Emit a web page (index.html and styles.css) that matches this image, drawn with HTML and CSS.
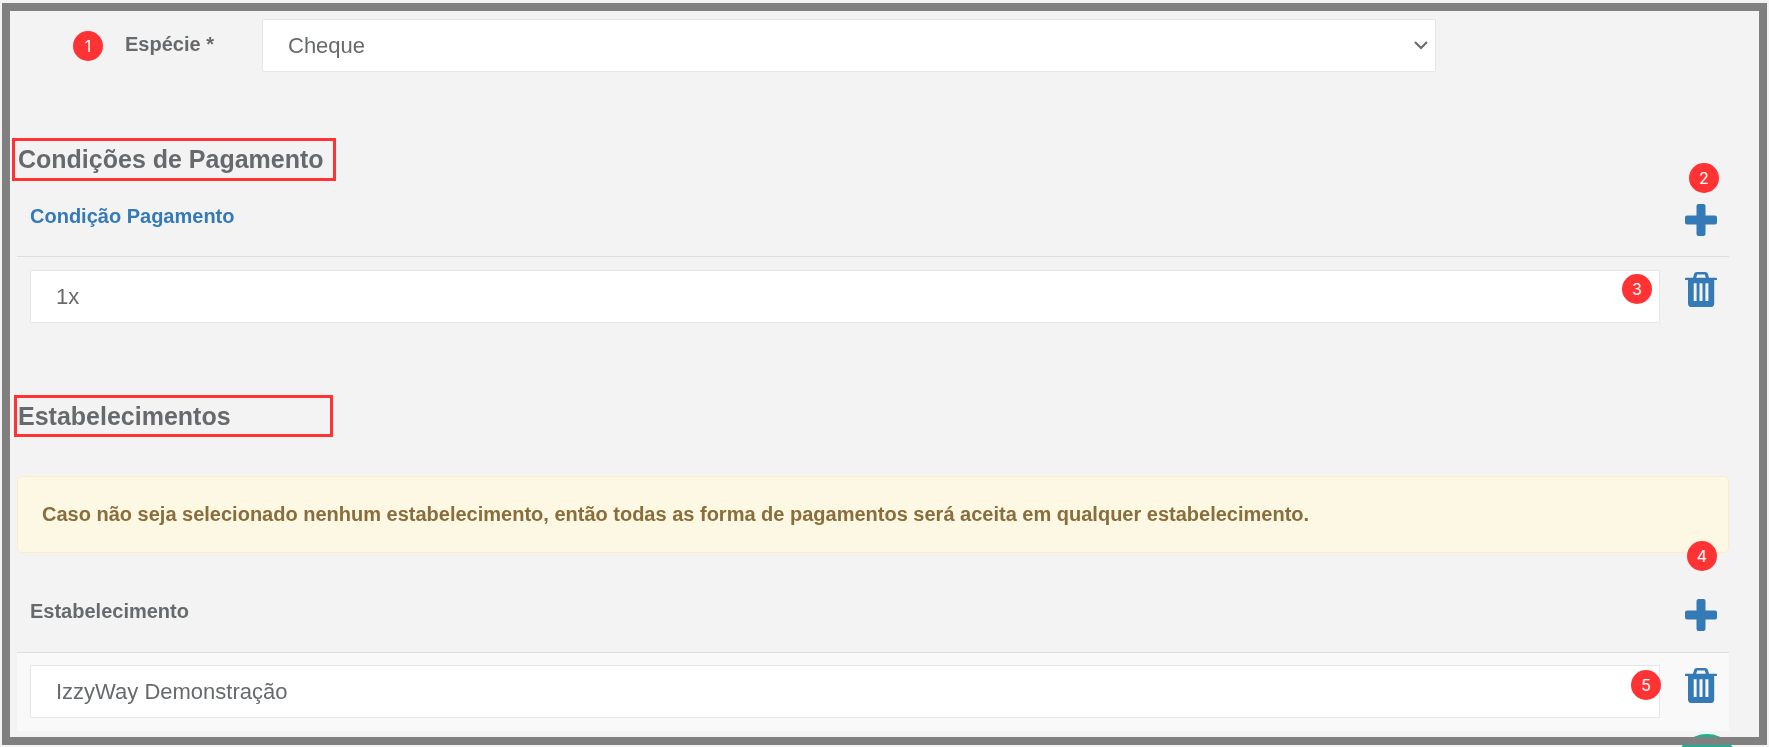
FILE: index.html
```html
<!DOCTYPE html>
<html lang="pt-BR">
<head>
<meta charset="utf-8">
<title>Forma de Pagamento</title>
<link rel="stylesheet" href="styles.css">
</head>
<body>
<svg class="sprite" aria-hidden="true">
  <symbol id="plus" viewBox="0 0 32 32"><path d="M13.500 0h5a2 2 0 0 1 2 2v9.500H30a2 2 0 0 1 2 2v5a2 2 0 0 1-2 2h-9.500V30a2 2 0 0 1-2 2h-5a2 2 0 0 1-2-2v-9.500H2a2 2 0 0 1-2-2v-5a2 2 0 0 1 2-2h9.500V2a2 2 0 0 1 2-2z"/></symbol>
  <symbol id="trash" viewBox="0 0 32 35"><path fill-rule="evenodd" d="M11.800 0h8.400c1.200 0 2.200.700 2.600 1.800L24 5.700h7.300c.4 0 .7.300.7.700v1c0 .4-.3.700-.7.700H29.200v23.300c0 2-1.200 3.600-2.800 3.600H5.800C4.200 35 3 33.400 3 31.400V8.100H.7C.3 8.100 0 7.800 0 7.400v-1c0-.4.3-.7.700-.7H8l1.200-3.900C9.600.700 10.600 0 11.800 0zM12.200 2.500l-1 3.200h9.600l-1-3.200zM8.700 11.300h2.900v17.700H8.700zM14.500 11.300h3v17.700h-3zM20.400 11.300h3v17.700h-3z"/></symbol>
</svg>
<button class="fab" type="button" aria-label="Ajuda"></button>
<main class="frame">
  <div class="field-row">
    <span class="badge">1</span>
    <label class="field-label" for="especie">Espécie *</label>
    <div class="select-wrap">
      <select class="control" id="especie"><option>Cheque</option></select>
      <svg class="chevron" viewBox="0 0 14 10" aria-hidden="true"><path d="M1 2l6 6 6-6"/></svg>
    </div>
  </div>

  <section>
    <h2 class="title title-conditions">Condições de Pagamento</h2>
    <table class="grid">
      <thead>
        <tr>
          <th><a class="sort" href="#" id="col-condicao">Condição Pagamento</a></th>
          <th class="action"><span class="badge badge-add">2</span><button class="icon-btn" type="button" aria-label="Adicionar condição"><svg class="icon-plus"><use href="#plus"/></svg></button></th>
        </tr>
      </thead>
      <tbody>
        <tr>
          <td><input class="control" type="text" value="1x" aria-labelledby="col-condicao"><span class="badge badge-condition">3</span></td>
          <td class="action"><button class="icon-btn" type="button" aria-label="Excluir condição"><svg class="icon-trash"><use href="#trash"/></svg></button></td>
        </tr>
      </tbody>
    </table>
  </section>

  <section>
    <h2 class="title title-stores">Estabelecimentos</h2>
    <p class="alert">Caso não seja selecionado nenhum estabelecimento, então todas as forma de pagamentos será aceita em qualquer estabelecimento.</p>
    <table class="grid striped">
      <thead>
        <tr>
          <th id="col-estabelecimento">Estabelecimento</th>
          <th class="action"><span class="badge badge-add-store">4</span><button class="icon-btn" type="button" aria-label="Adicionar estabelecimento"><svg class="icon-plus"><use href="#plus"/></svg></button></th>
        </tr>
      </thead>
      <tbody>
        <tr>
          <td><input class="control" type="text" value="IzzyWay Demonstração" aria-labelledby="col-estabelecimento"><span class="badge badge-store">5</span></td>
          <td class="action"><button class="icon-btn" type="button" aria-label="Excluir estabelecimento"><svg class="icon-trash"><use href="#trash"/></svg></button></td>
        </tr>
      </tbody>
    </table>
  </section>
</main>
</body>
</html>
```
FILE: styles.css
```css
* { box-sizing: border-box; }

body {
  margin: 0;
  padding: 3px 2px 2px;
  background: #f3f3f4;
  color: #676a6c;
  font: 20px/24px "Liberation Sans", Arial, sans-serif;
}

.sprite { display: none; }

.frame {
  position: relative;
  border: 8px solid #808080;
  padding: 8px 30px 6px 7px;
}

.fab {
  position: fixed;
  right: 30px;
  bottom: -51px;
  width: 64px;
  height: 64px;
  border: 0;
  border-radius: 50%;
  background: #1ab394;
}

.field-row {
  display: flex;
  align-items: flex-start;
  padding: 0 17.1% 66px 56px;
}

.field-row .badge { margin: 12px 22px 0 0; }

.field-label {
  width: 137px;
  padding-top: 13px;
  font-weight: bold;
}

.select-wrap { position: relative; flex: 1; }

.control {
  display: block;
  width: 100%;
  height: 53px;
  padding: 0 25px;
  border: 1px solid #e5e6e7;
  border-radius: 1px;
  background: #fff;
  color: inherit;
  font: 22px "Liberation Sans", Arial, sans-serif;
  appearance: none;
}

.chevron {
  position: absolute;
  right: 8px;
  top: 21px;
  width: 14px;
  height: 10px;
  fill: none;
  stroke: #676a6c;
  stroke-width: 2;
}

.title {
  margin: 0 0 10px -5px;
  width: 324px;
  border: 3px solid #f33;
  padding-left: 3px;
  font-size: 25px;
  line-height: 37px;
  white-space: nowrap;
}

.title-stores {
  margin: 59px 0 39px -3px;
  width: 319px;
  padding-left: 1px;
  line-height: 36px;
}

.grid {
  width: 100%;
  border-collapse: separate;
  border-spacing: 0;
}

.grid th {
  padding: 13px 13px 20px;
  text-align: left;
  vertical-align: top;
}

.grid td {
  position: relative;
  border-top: 1px solid #ddd;
  padding: 13px;
  vertical-align: top;
}

.grid .action {
  position: relative;
  width: 56px;
  padding-left: 12px;
  padding-right: 12px;
}

.grid td.action { padding-top: 15px; }

.striped th { padding-bottom: 21px; }

.striped td {
  padding-top: 12px;
  background: #f9f9f9;
}

.sort { color: #337ab7; text-decoration: none; }

.icon-btn {
  display: block;
  padding: 0;
  border: 0;
  background: none;
  color: #337ab7;
}

.icon-btn svg { display: block; width: 32px; fill: currentColor; }
.icon-plus { height: 32px; }
.icon-trash { height: 35px; }

.alert {
  margin: 0 0 33px;
  border: 1px solid #faebcc;
  border-radius: 5px;
  padding: 25px 24px 26px;
  background: #fcf8e3;
  color: #8a6d3b;
  font-weight: bold;
}

.badge {
  flex: none;
  width: 30px;
  height: 30px;
  border-radius: 50%;
  background: #f33;
  color: #fff;
  font: 16px/30px Inter, sans-serif;
  text-align: center;
}

.grid .badge { position: absolute; }
.badge-add { right: 10px; top: -28px; }
.badge-condition { right: 21px; top: 17px; }
.badge-add-store { right: 12px; top: -45px; }
.badge-store { right: 12px; top: 17px; }
```
